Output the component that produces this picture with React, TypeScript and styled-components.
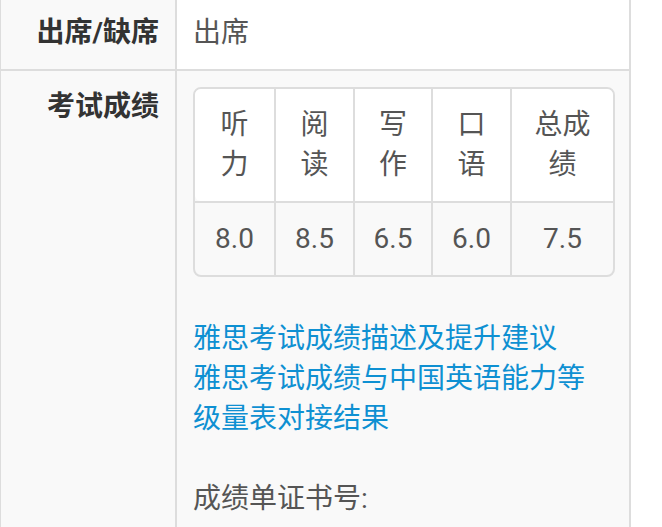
import React from "react";
import styled, { createGlobalStyle } from "styled-components";

const Global = createGlobalStyle`
  html, body { margin: 0; padding: 0; background: #fff; }
  body {
    font-family: Roboto, "Helvetica Neue", "Noto Sans CJK SC", sans-serif;
    font-size: 28px;
    line-height: 40px;
    color: #555;
    overflow: hidden;
  }
  * { box-sizing: border-box; }
`;

const Sheet = styled.div`
  width: 632px;
  margin: -5px 0 0 -1px;
  border: 2px solid #ddd;
  border-bottom: none;
`;

const Row = styled.div<{ $striped?: boolean }>`
  display: grid;
  grid-template-columns: 174px 454px;
  border-bottom: 2px solid #ddd;
  background: ${(p) => (p.$striped ? "#f9f9f9" : "#fff")};
`;

const Label = styled.div`
  padding: 16px;
  text-align: right;
  font-weight: bold;
  color: #333;
  background: #f9f9f9;
`;

const Value = styled.div`
  padding: 16px 18px 16px 16px;
  border-left: 2px solid #ddd;
  color: #555;
`;

const ScoreTable = styled.table`
  width: 100%;
  table-layout: fixed;
  border-collapse: separate;
  border-spacing: 0;
  border: 2px solid #ddd;
  border-radius: 8px;
  margin: 0 0 42px;
`;

const Head = styled.th<{ $first?: boolean; $last?: boolean }>`
  padding: 16px;
  background: #fff;
  font-weight: normal;
  color: #555;
  text-align: center;
  vertical-align: top;
  border-left: ${(p) => (p.$first ? "none" : "2px solid #ddd")};
  border-radius: ${(p) =>
    p.$first ? "6px 0 0 6px" : p.$last ? "0 6px 0 0" : "0"};
`;

const Score = styled.td<{ $first?: boolean }>`
  padding: 16px 0;
  text-align: center;
  color: #555;
  border-top: 2px solid #ddd;
  border-left: ${(p) => (p.$first ? "none" : "2px solid #ddd")};
`;

const Link = styled.a`
  color: #0e90d2;
  text-decoration: none;
`;

const Plain = styled.span`
  color: #555;
`;

const heads = ["听力", "阅读", "写作", "口语", "总成绩"];
const scores = ["8.0", "8.5", "6.5", "6.0", "7.5"];
const widths = [79, 79, 78, 79, 103];

export default function App() {
  return (
    <>
      <Global />
      <Sheet>
        <Row>
          <Label>出席/缺席</Label>
          <Value>出席</Value>
        </Row>
        <Row $striped>
          <Label>考试成绩</Label>
          <Value>
            <ScoreTable>
              <colgroup>
                {widths.map((w, i) => (
                  <col key={i} style={{ width: w }} />
                ))}
              </colgroup>
              <thead>
                <tr>
                  {heads.map((h, i) => (
                    <Head key={h} $first={i === 0} $last={i === heads.length - 1}>
                      {h}
                    </Head>
                  ))}
                </tr>
              </thead>
              <tbody>
                <tr>
                  {scores.map((s, i) => (
                    <Score key={i} $first={i === 0}>
                      {s}
                    </Score>
                  ))}
                </tr>
              </tbody>
            </ScoreTable>
            <Link href="#">雅思考试成绩描述及提升建议</Link>
            <br />
            <Link href="#">雅思考试成绩与中国英语能力等级量表对接结果</Link>
            <br />
            <br />
            <Plain>成绩单证书号:</Plain>
            <br />
            <Plain>19CN012345ZHAN001A</Plain>
          </Value>
        </Row>
      </Sheet>
    </>
  );
}
